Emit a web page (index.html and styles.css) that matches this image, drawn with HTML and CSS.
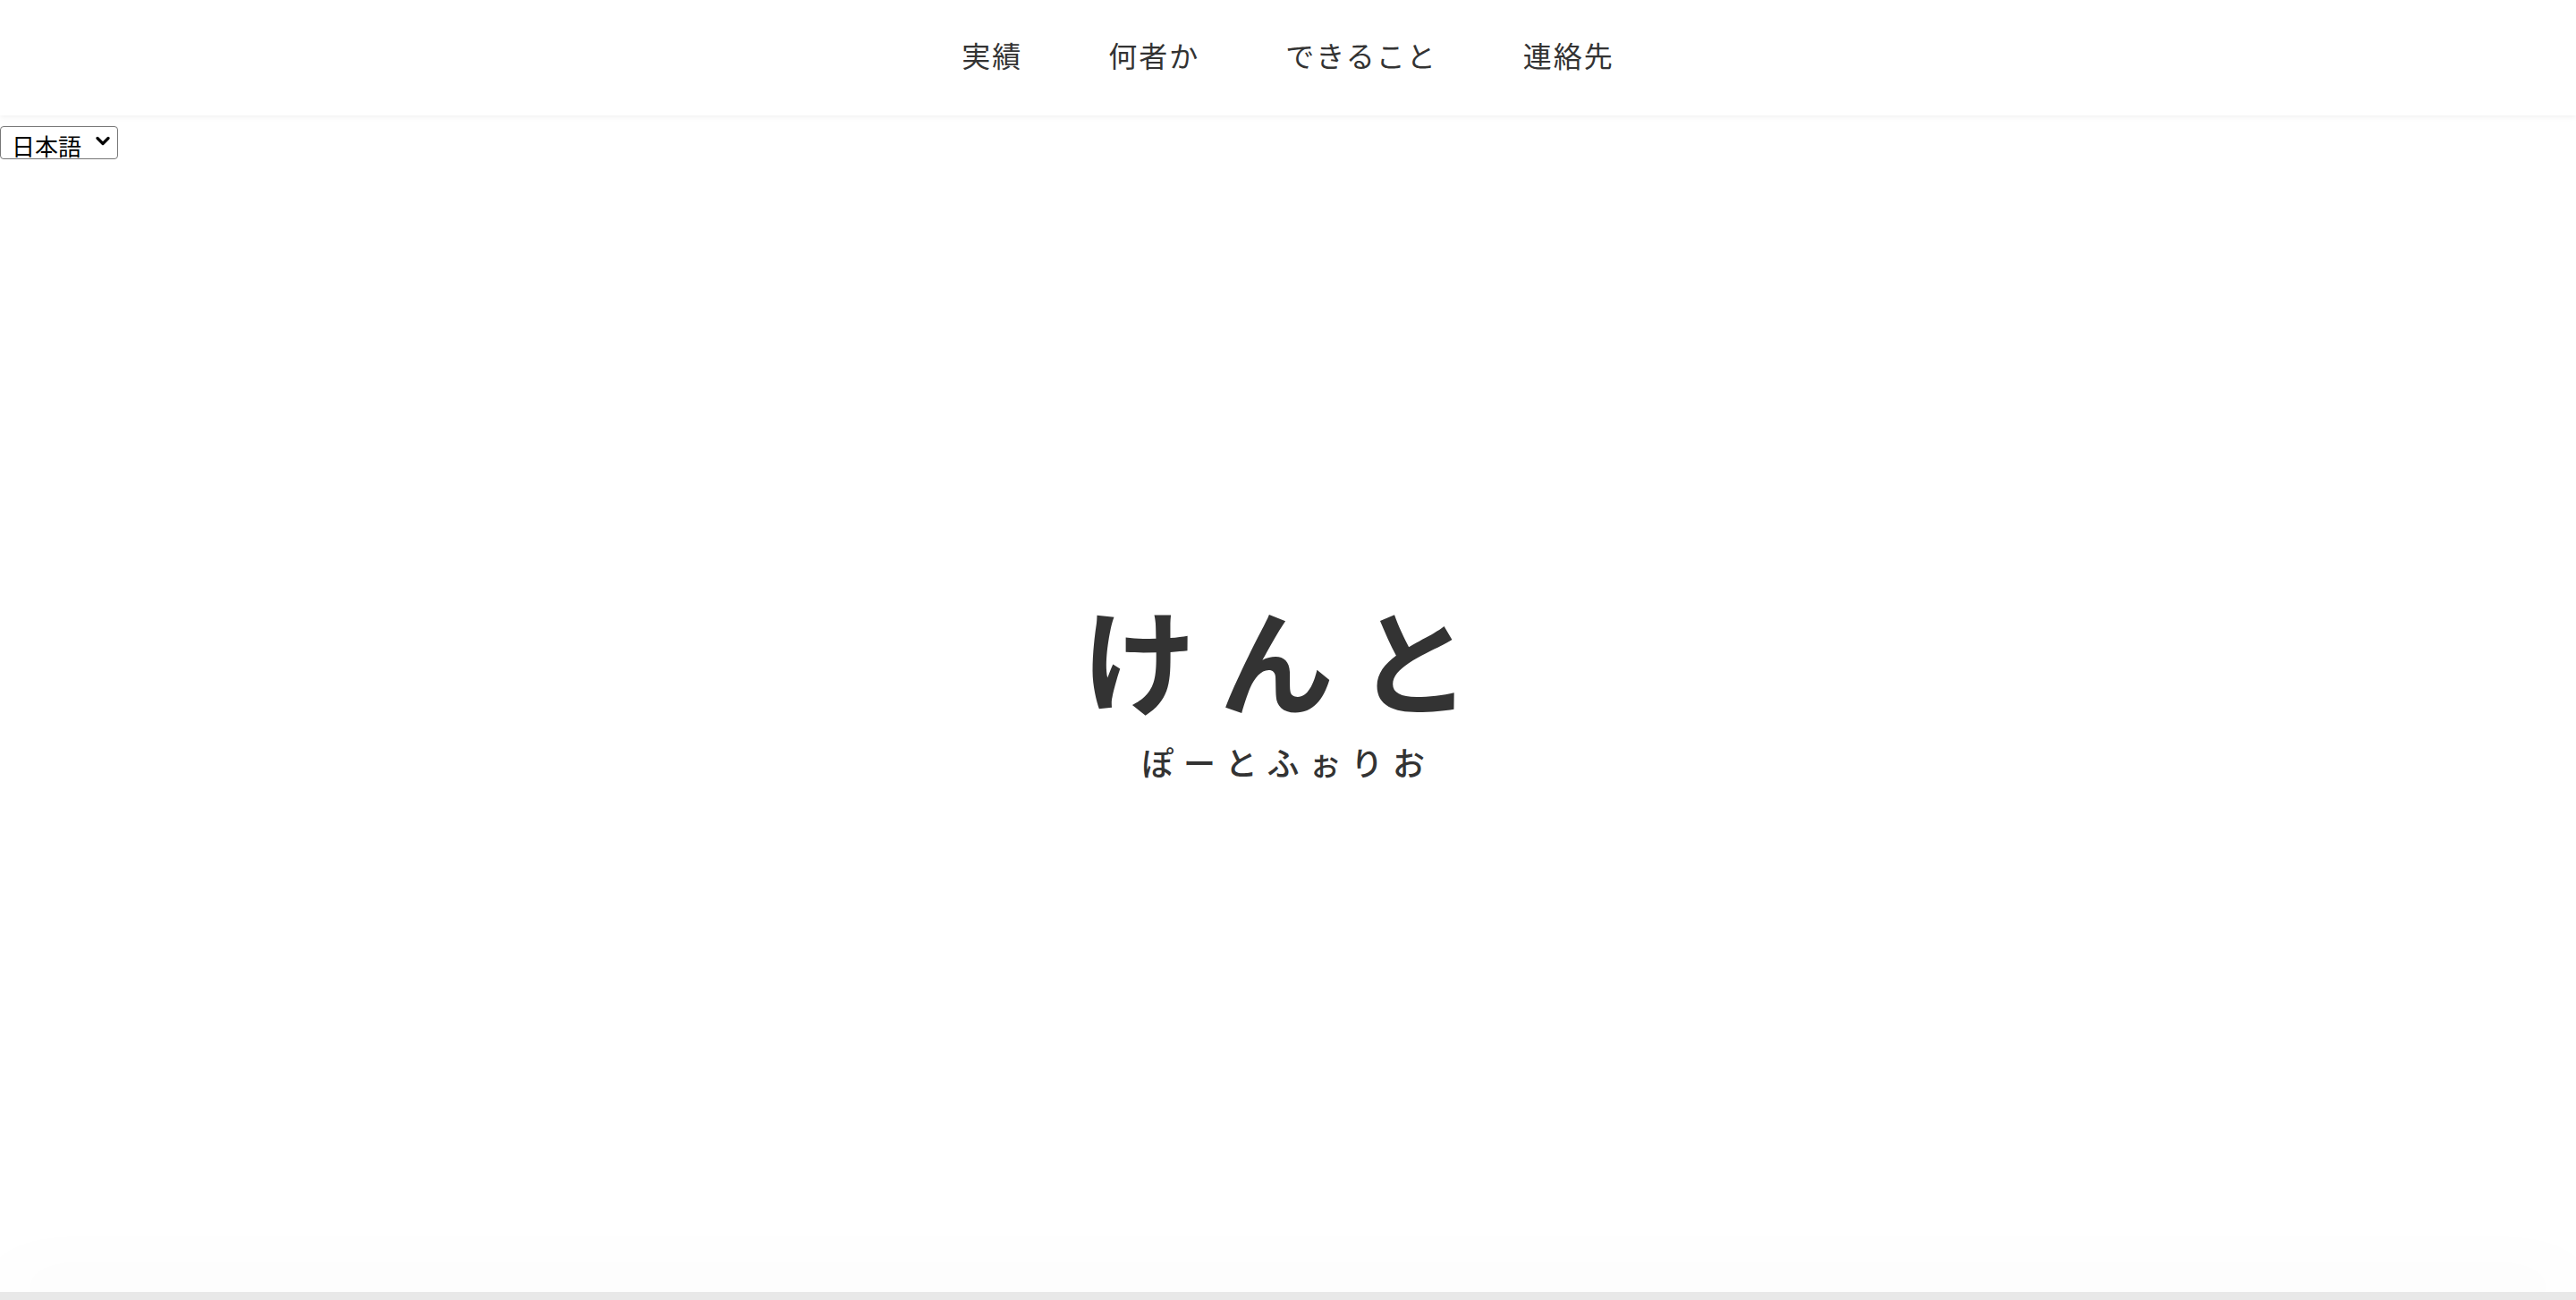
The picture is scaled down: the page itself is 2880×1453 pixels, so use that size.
FILE: index.html
```html
<!DOCTYPE html>
<html lang="ja">
<head>
<meta charset="utf-8">
<title>けんと ぽーとふぉりお</title>
<link rel="stylesheet" href="styles.css">
</head>
<body>
<header class="site-header">
  <nav class="nav">
    <a class="nav-item" href="#works">実績</a>
    <a class="nav-item" href="#about">何者か</a>
    <a class="nav-item" href="#skills">できること</a>
    <a class="nav-item" href="#contact">連絡先</a>
  </nav>
</header>
<div class="lang-row">
  <div class="lang-wrap">
    <select class="lang-select">
      <option>日本語</option>
      <option>English</option>
    </select>
    <svg class="lang-chevron" viewBox="0 0 16 12" width="16" height="12" aria-hidden="true">
      <path d="M2 2.5 L8 8.5 L14 2.5" fill="none" stroke="#000" stroke-width="3.2" stroke-linecap="round" stroke-linejoin="round"/>
    </svg>
  </div>
</div>
<section class="hero">
  <div class="hero-inner">
    <h1 class="hero-title">けんと</h1>
    <p class="hero-sub">ぽーとふぉりお</p>
  </div>
</section>
<section class="next-section"></section>
</body>
</html>
```

FILE: styles.css
```css
html, body {
  margin: 0;
  padding: 0;
  background: #ffffff;
}
body {
  font-family: "Noto Sans CJK JP", "Noto Sans", sans-serif;
  color: #333333;
  overflow: hidden;
}
.site-header {
  height: 129px;
  display: flex;
  align-items: center;
  justify-content: center;
  background: #ffffff;
  box-shadow: 0 2px 6px rgba(0, 0, 0, 0.06);
  position: relative;
  z-index: 2;
}
.nav {
  display: flex;
  gap: 96px;
  padding-bottom: 6px;
}
.nav-item {
  font-size: 32px;
  line-height: 1.2;
  letter-spacing: 2px;
  color: #333333;
  text-decoration: none;
  font-weight: 400;
}
.lang-row {
  padding-top: 12px;
  height: 37px;
}
.lang-wrap {
  position: relative;
  width: 132px;
  height: 37px;
}
.lang-select {
  display: block;
  margin: 0;
  height: 37px;
  width: 132px;
  box-sizing: border-box;
  appearance: none;
  -webkit-appearance: none;
  font-family: "Noto Sans CJK JP", sans-serif;
  font-size: 26px;
  line-height: 30px;
  color: #000;
  border: 1px solid #767676;
  border-radius: 4px;
  background: #fff;
  padding: 6px 0 0 12px;
  overflow: hidden;
}
.lang-chevron {
  position: absolute;
  left: 107px;
  top: 11px;
  pointer-events: none;
}
.hero {
  height: 1266px;
  display: flex;
  align-items: center;
  justify-content: center;
  box-sizing: border-box;
  padding-bottom: 86px;
}
.hero-inner {
  text-align: center;
}
.hero-title {
  margin: 0;
  font-size: 128px;
  line-height: 1.2;
  font-weight: 700;
  letter-spacing: 0.2em;
  color: #333333;
}
.hero-sub {
  margin: 13px 0 0;
  font-size: 36px;
  line-height: 1.5;
  font-weight: 500;
  letter-spacing: 0.3em;
  color: #333333;
}
.next-section {
  height: 9px;
  background: #e8e8e8;
  box-shadow: 0 -10px 80px rgba(0, 0, 0, 0.1);
  position: relative;
}
```
